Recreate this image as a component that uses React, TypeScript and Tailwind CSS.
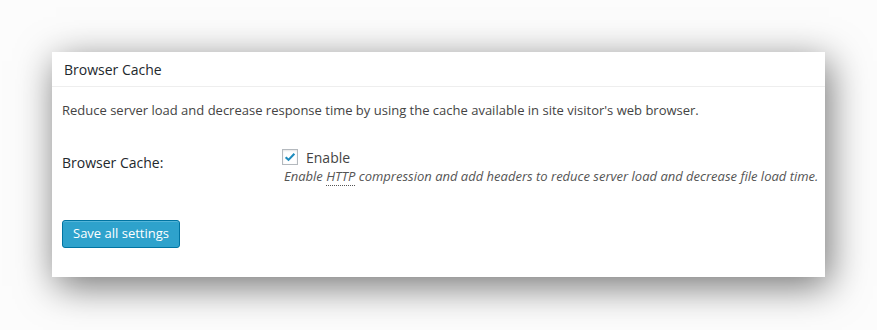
export default function App() {
  return (
    <div
      className="w-[877px] h-[330px] bg-[#fcfcfc] overflow-hidden pt-[52px] pl-[52px]"
      style={{ fontFamily: '"Open Sans", "Noto Sans", sans-serif' }}
    >
      <div className="w-[773px] h-[225px] bg-white shadow-[4px_9px_36px_rgba(0,0,0,0.55)]">
        <div className="h-[35px] border-b border-[#eeeeee] pl-3 flex items-center text-[14px] text-[#23282d]">
          Browser Cache
        </div>
        <div className="pl-[10px]">
          <p className="mt-[13px] text-[13px] leading-5 text-[#444]">
            Reduce server load and decrease response time by using the cache available in site visitor's web browser.
          </p>
          <div className="mt-[26px] flex">
            <div className="w-[220px] pt-[6px] text-[14px] text-[#23282d]">Browser Cache:</div>
            <div>
              <label className="flex items-center gap-2 h-[22px]">
                <span className="w-4 h-4 border border-[#b4b9be] bg-white shadow-[inset_0_1px_2px_rgba(0,0,0,0.1)] flex items-center justify-center">
                  <svg viewBox="0 0 16 16" className="w-[14px] h-[14px]">
                    <path d="M3 8.2 L6.3 11.3 L13 4.2" fill="none" stroke="#1e8cbe" strokeWidth="2.4" />
                  </svg>
                </span>
                <span className="text-[14px] text-[#444]">Enable</span>
              </label>
              <p className="-mt-[2px] ml-[2px] text-[13px] leading-5 italic text-[#555]">
                Enable{' '}
                <abbr title="Hypertext Transfer Protocol" className="no-underline border-b border-dotted border-[#555]">
                  HTTP
                </abbr>{' '}
                compression and add headers to reduce server load and decrease file load time.
              </p>
            </div>
          </div>
          <button className="mt-[34px] h-[28px] px-[10px] rounded-[3px] bg-[#2ea2cc] border border-[#0074a2] text-white text-[13px] shadow-[inset_0_1px_0_rgba(120,200,230,0.5)]">
            Save all settings
          </button>
        </div>
      </div>
    </div>
  );
}
